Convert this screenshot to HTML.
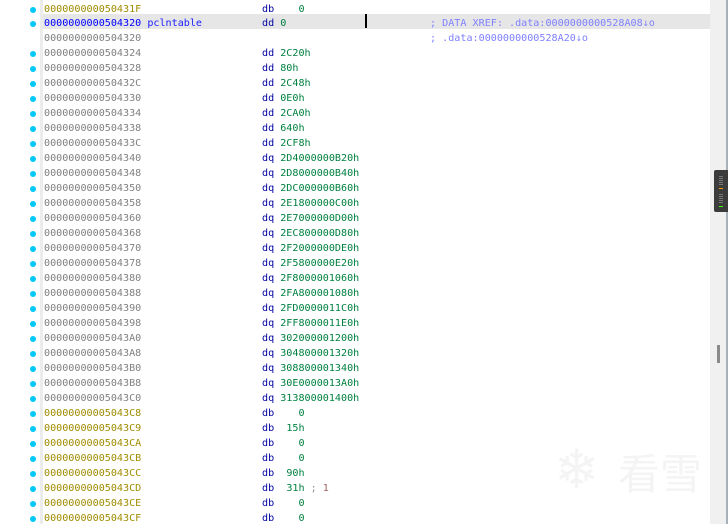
<!DOCTYPE html>
<html><head><meta charset="utf-8"><style>
html,body{margin:0;padding:0;}
body{width:728px;height:524px;background:#fff;position:relative;overflow:hidden;font-family:"DejaVu Sans Mono","Liberation Mono",monospace;font-size:10.1px;}
.band{position:absolute;left:40px;top:0;width:3px;height:524px;background:#ececec;}
.hl{position:absolute;left:43px;top:14px;width:667px;height:15px;background:#e6e6e6;}
.r{position:absolute;left:0;height:15px;line-height:15px;white-space:pre;transform:translateY(2px);}
.d{position:absolute;left:29.5px;top:4.5px;width:6px;height:6px;border-radius:50%;background:#00c8f8;}
.a{position:absolute;left:44px;color:#808080;}
.o{color:#a08c00;}
.m{position:absolute;left:262px;color:#0000a0;}
.v{color:#008040;}
.c{position:absolute;left:430px;color:#8080ff;}
.sb{position:absolute;left:710px;top:0;width:16px;height:524px;background:#f0f0f0;}
.sl{position:absolute;left:726px;top:0;width:2px;height:524px;background:#a8b0b8;}
.w{position:absolute;left:714px;top:170px;width:14px;height:42px;background:#3c3c3c;border-radius:2px 0 0 2px;}
.th{position:absolute;left:717px;top:345px;width:3px;height:18px;background:#8a8a8a;}
.cur{position:absolute;left:365px;top:14px;width:2px;height:14px;background:#000;}
.wm1{position:absolute;left:554px;top:440px;font-family:"DejaVu Sans",sans-serif;font-size:54px;line-height:60px;color:#f4f4f4;}
.wm2{position:absolute;left:618px;top:444px;font-family:"Noto Sans CJK SC",sans-serif;font-size:42px;line-height:56px;color:#f4f4f4;}
</style></head><body>
<div class="band"></div>
<div class="hl"></div>
<div class="cur"></div>
<div class="wm1">❄</div>
<div class="wm2">看雪</div>
<div class="r" style="top:0"><i class="d"></i><span class="a o">000000000050431F</span><span class="m">db    <span class="v">0</span></span></div>
<div class="r" style="top:14px"><i class="d"></i><span class="a" style="color:#0000ff">0000000000504320 <span style="color:#2020ff">pclntable</span></span><span class="m">dd <span class="v">0</span></span><span class="c">; DATA XREF: .data:0000000000528A08↓o</span></div>
<div class="r" style="top:29px"><span class="a">0000000000504320</span><span class="c">; .data:0000000000528A20↓o</span></div>
<div class="r" style="top:44px"><i class="d"></i><span class="a">0000000000504324</span><span class="m">dd <span class="v">2C20h</span></span></div>
<div class="r" style="top:59px"><i class="d"></i><span class="a">0000000000504328</span><span class="m">dd <span class="v">80h</span></span></div>
<div class="r" style="top:74px"><i class="d"></i><span class="a">000000000050432C</span><span class="m">dd <span class="v">2C48h</span></span></div>
<div class="r" style="top:89px"><i class="d"></i><span class="a">0000000000504330</span><span class="m">dd <span class="v">0E0h</span></span></div>
<div class="r" style="top:104px"><i class="d"></i><span class="a">0000000000504334</span><span class="m">dd <span class="v">2CA0h</span></span></div>
<div class="r" style="top:119px"><i class="d"></i><span class="a">0000000000504338</span><span class="m">dd <span class="v">640h</span></span></div>
<div class="r" style="top:134px"><i class="d"></i><span class="a">000000000050433C</span><span class="m">dd <span class="v">2CF8h</span></span></div>
<div class="r" style="top:149px"><i class="d"></i><span class="a">0000000000504340</span><span class="m">dq <span class="v">2D4000000B20h</span></span></div>
<div class="r" style="top:164px"><i class="d"></i><span class="a">0000000000504348</span><span class="m">dq <span class="v">2D8000000B40h</span></span></div>
<div class="r" style="top:179px"><i class="d"></i><span class="a">0000000000504350</span><span class="m">dq <span class="v">2DC000000B60h</span></span></div>
<div class="r" style="top:194px"><i class="d"></i><span class="a">0000000000504358</span><span class="m">dq <span class="v">2E1800000C00h</span></span></div>
<div class="r" style="top:209px"><i class="d"></i><span class="a">0000000000504360</span><span class="m">dq <span class="v">2E7000000D00h</span></span></div>
<div class="r" style="top:224px"><i class="d"></i><span class="a">0000000000504368</span><span class="m">dq <span class="v">2EC800000D80h</span></span></div>
<div class="r" style="top:239px"><i class="d"></i><span class="a">0000000000504370</span><span class="m">dq <span class="v">2F2000000DE0h</span></span></div>
<div class="r" style="top:254px"><i class="d"></i><span class="a">0000000000504378</span><span class="m">dq <span class="v">2F5800000E20h</span></span></div>
<div class="r" style="top:269px"><i class="d"></i><span class="a">0000000000504380</span><span class="m">dq <span class="v">2F8000001060h</span></span></div>
<div class="r" style="top:284px"><i class="d"></i><span class="a">0000000000504388</span><span class="m">dq <span class="v">2FA800001080h</span></span></div>
<div class="r" style="top:299px"><i class="d"></i><span class="a">0000000000504390</span><span class="m">dq <span class="v">2FD0000011C0h</span></span></div>
<div class="r" style="top:314px"><i class="d"></i><span class="a">0000000000504398</span><span class="m">dq <span class="v">2FF8000011E0h</span></span></div>
<div class="r" style="top:329px"><i class="d"></i><span class="a">00000000005043A0</span><span class="m">dq <span class="v">302000001200h</span></span></div>
<div class="r" style="top:344px"><i class="d"></i><span class="a">00000000005043A8</span><span class="m">dq <span class="v">304800001320h</span></span></div>
<div class="r" style="top:359px"><i class="d"></i><span class="a">00000000005043B0</span><span class="m">dq <span class="v">308800001340h</span></span></div>
<div class="r" style="top:374px"><i class="d"></i><span class="a">00000000005043B8</span><span class="m">dq <span class="v">30E0000013A0h</span></span></div>
<div class="r" style="top:389px"><i class="d"></i><span class="a">00000000005043C0</span><span class="m">dq <span class="v">313800001400h</span></span></div>
<div class="r" style="top:404px"><i class="d"></i><span class="a o">00000000005043C8</span><span class="m">db    <span class="v">0</span></span></div>
<div class="r" style="top:419px"><i class="d"></i><span class="a o">00000000005043C9</span><span class="m">db  <span class="v">15h</span></span></div>
<div class="r" style="top:434px"><i class="d"></i><span class="a o">00000000005043CA</span><span class="m">db    <span class="v">0</span></span></div>
<div class="r" style="top:449px"><i class="d"></i><span class="a o">00000000005043CB</span><span class="m">db    <span class="v">0</span></span></div>
<div class="r" style="top:464px"><i class="d"></i><span class="a o">00000000005043CC</span><span class="m">db  <span class="v">90h</span></span></div>
<div class="r" style="top:479px"><i class="d"></i><span class="a o">00000000005043CD</span><span class="m">db  <span class="v">31h</span> <span style="color:#909090">; <span style="color:#a06060">1</span></span></span></div>
<div class="r" style="top:494px"><i class="d"></i><span class="a o">00000000005043CE</span><span class="m">db    <span class="v">0</span></span></div>
<div class="r" style="top:509px"><i class="d"></i><span class="a o">00000000005043CF</span><span class="m">db    <span class="v">0</span></span></div>
<div class="sb"></div>
<div class="sl"></div>
<div class="w">
<svg width="14" height="42" style="position:absolute;left:0;top:0">
<g stroke="#777" stroke-width="1">
<line x1="5" y1="6.5" x2="9" y2="6.5"/><line x1="5" y1="8.5" x2="9" y2="8.5"/><line x1="5" y1="10.5" x2="9" y2="10.5"/><line x1="5" y1="12.5" x2="9" y2="12.5"/><line x1="5" y1="14.5" x2="9" y2="14.5"/>
<line x1="5" y1="24.5" x2="9" y2="24.5"/><line x1="5" y1="26.5" x2="9" y2="26.5"/><line x1="5" y1="28.5" x2="9" y2="28.5"/><line x1="5" y1="30.5" x2="9" y2="30.5"/><line x1="5" y1="32.5" x2="9" y2="32.5"/>
</g>
<line x1="5" y1="18.5" x2="9" y2="18.5" stroke="#ff9900"/>
<line x1="5" y1="36.5" x2="9" y2="36.5" stroke="#33ff00"/>
</svg></div>
<div class="th"></div>
</body></html>
